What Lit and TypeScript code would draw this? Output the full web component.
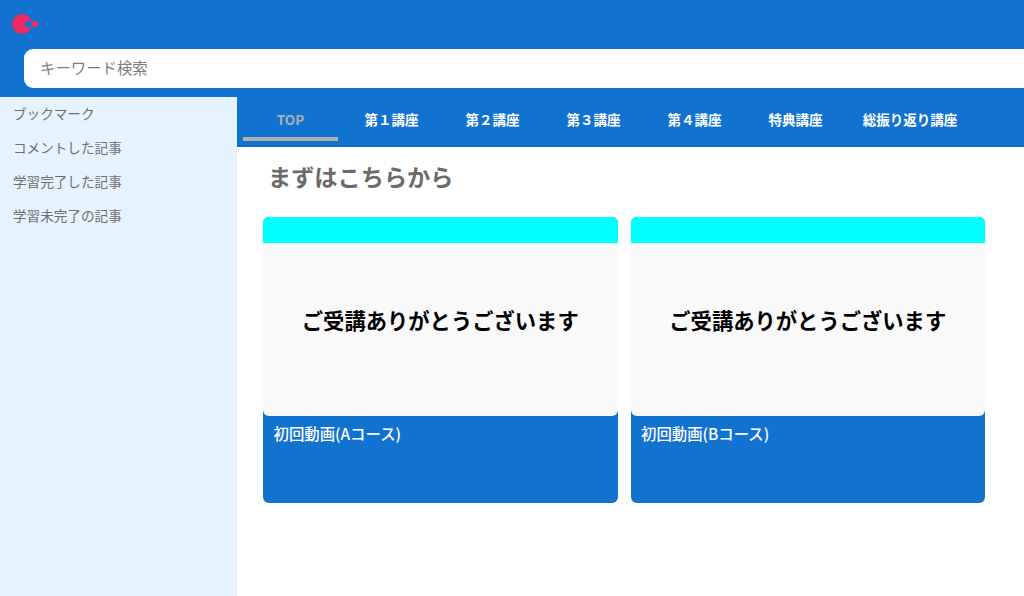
import { LitElement, html, css } from "lit";
import { customElement } from "lit/decorators.js";

const TABS = ["TOP", "第１講座", "第２講座", "第３講座", "第４講座", "特典講座", "総振り返り講座"];
const SIDE = ["ブックマーク", "コメントした記事", "学習完了した記事", "学習未完了の記事"];
const CARDS = ["初回動画(Aコース)", "初回動画(Bコース)"];

@customElement("app-root")
export class AppRoot extends LitElement {
  static styles = css`
    :host {
      display: block;
      width: 1024px;
      height: 596px;
      overflow: hidden;
      background: #fff;
      font-family: "Noto Sans CJK JP", "Noto Sans", sans-serif;
    }
    .header {
      height: 97px;
      background: #1173cf;
      box-sizing: border-box;
      padding: 14px 0 0 12px;
    }
    .logo { display: block; width: 27px; height: 20px; }
    .search {
      margin: 15px 0 0 12px;
      height: 39px;
      width: 1040px;
      background: #fff;
      border-radius: 9px;
      box-sizing: border-box;
      padding: 0 0 3px 16px;
      display: flex;
      align-items: center;
      font-size: 15.4px;
      color: #7b7f85;
    }
    .main { display: flex; height: 499px; }
    .side {
      width: 237px;
      flex: none;
      background: #e6f3ff;
      padding: 0 0 0 13px;
      box-sizing: border-box;
    }
    .side div {
      height: 34px;
      line-height: 33px;
      font-size: 13.6px;
      color: #6f6f6f;
    }
    .content { flex: 1; min-width: 0; }
    .tabs {
      height: 50px;
      background: #1173cf;
      display: flex;
      box-sizing: border-box;
      padding-left: 6px;
    }
    .tab {
      width: 95px;
      margin-right: 6px;
      height: 44px;
      box-sizing: border-box;
      text-align: center;
      color: #fff;
      font-size: 13.5px;
      font-weight: 700;
      line-height: 44px;
      white-space: nowrap;
    }
    .tab.wide { width: 122px; }
    .tab.active { color: #a9b0b8; border-bottom: 4px solid #b0b0b0; }
    h1 {
      margin: 0;
      padding: 14px 0 0 31px;
      height: 70px;
      box-sizing: border-box;
      font-size: 23.2px;
      line-height: 31px;
      font-weight: 700;
      color: #6b6b6b;
    }
    .cards {
      display: flex;
      gap: 13px;
      padding-left: 26px;
    }
    .card {
      width: 354.5px;
      height: 286px;
      background: #1173cf;
      border-radius: 6px;
      overflow: hidden;
    }
    .top { height: 26px; background: #00ffff; }
    .thumb {
      height: 173px;
      box-sizing: border-box;
      padding-bottom: 20px;
      background: #f9f9f9;
      border-radius: 0 0 6px 6px;
      display: flex;
      align-items: center;
      justify-content: center;
      color: #000;
      font-size: 21.3px;
      font-weight: 700;
    }
    .cap {
      padding: 6px 0 0 10.5px;
      color: #fff;
      font-size: 15.4px;
      line-height: 22px;
      font-weight: 500;
    }
  `;

  render() {
    return html`
      <div class="header">
        <svg class="logo" viewBox="0 0 27 20">
          <circle cx="10" cy="10" r="10" fill="#f0295f"></circle>
          <circle cx="16.5" cy="10.5" r="3.4" fill="#1173cf"></circle>
          <circle cx="23" cy="10" r="3.2" fill="#f0295f"></circle>
        </svg>
        <div class="search">キーワード検索</div>
      </div>
      <div class="main">
        <div class="side">${SIDE.map((s) => html`<div>${s}</div>`)}</div>
        <div class="content">
          <div class="tabs">
            ${TABS.map(
              (t, i) =>
                html`<div class="tab ${i === 0 ? "active" : ""} ${i === 6 ? "wide" : ""}">${t}</div>`
            )}
          </div>
          <h1>まずはこちらから</h1>
          <div class="cards">
            ${CARDS.map(
              (c) => html`
                <div class="card">
                  <div class="top"></div>
                  <div class="thumb">ご受講ありがとうございます</div>
                  <div class="cap">${c}</div>
                </div>
              `
            )}
          </div>
        </div>
      </div>
    `;
  }
}
